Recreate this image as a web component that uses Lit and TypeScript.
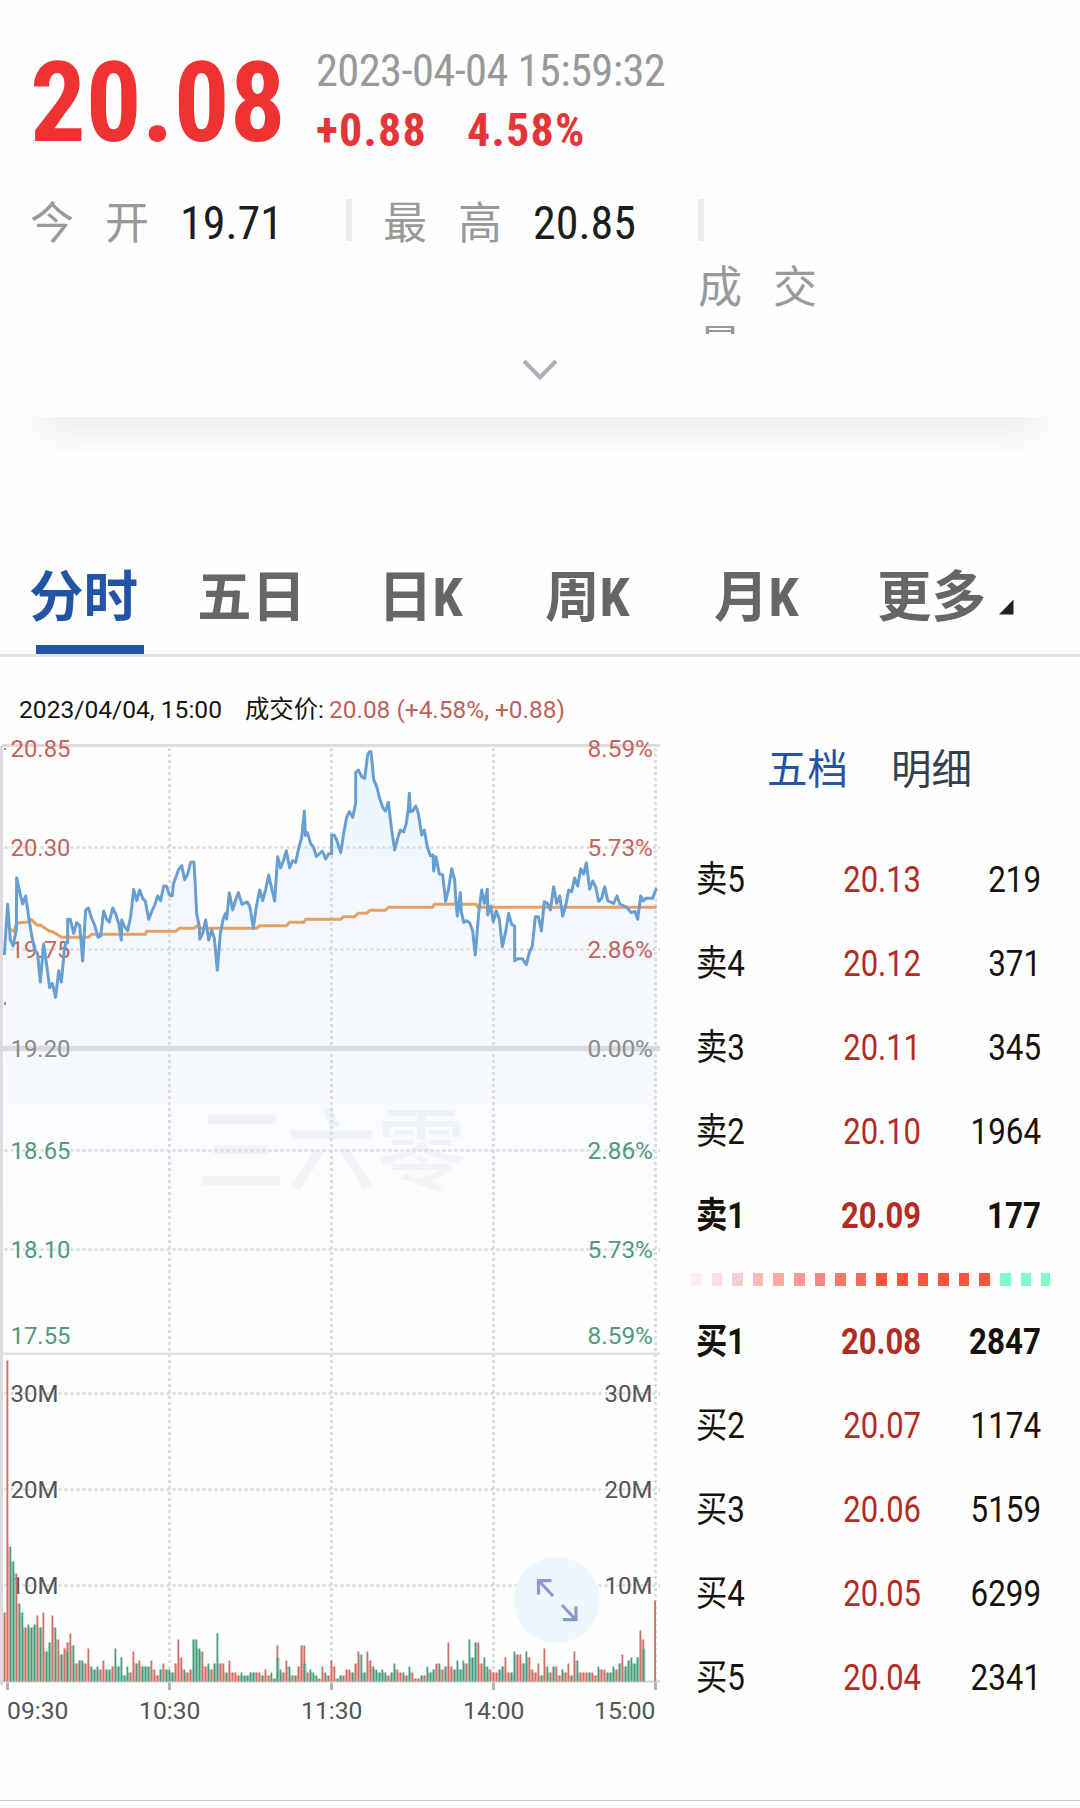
import { LitElement, html, svg, css } from "lit";
import { customElement } from "lit/decorators.js";
import { classMap } from "lit/directives/class-map.js";

/* Price and average traces, in thirds of a pixel from the chart's origin. */
const PRICE =
  "13,675 23,523 31,630 39,648 49,600 50,443 60,490 68,522 77,498 86,560 94,610 104,660 113,672 121,756 131,642 140,705 149,773 157,760 167,802 176,722 184,756 193,660 197,638 203,638 203,568 211,568 221,610 230,578 239,586 248,693 257,540 265,534 275,565 284,585 294,622 302,618 311,543 320,568 328,576 338,534 347,552 356,580 364,630 365,570 374,590 383,602 392,560 401,478 410,512 419,480 428,505 436,513 446,568 455,545 464,525 473,498 482,512 491,468 499,468 509,496 517,497 520,462 536,418 545,407 554,449 563,432 572,397 582,397 585,450 590,550 598,590 599,628 608,610 617,570 626,630 635,600 643,625 652,721 661,610 670,565 677,550 680,567 688,488 698,540 707,510 715,488 726,523 742,516 750,532 760,594 769,530 779,480 788,512 797,478 806,435 815,475 824,513 833,380 842,414 851,390 859,362 869,413 878,392 887,397 896,355 905,322 913,244 916,316 922,308 932,341 940,350 949,379 967,363 977,387 986,371 995,371 995,316 1003,316 1010,330 1022,368 1031,310 1040,262 1048,245 1058,262 1067,220 1067,128 1075,120 1085,140 1094,145 1103,75 1108,65 1113,65 1121,148 1130,170 1139,205 1148,232 1156,243 1165,217 1175,300 1184,360 1193,325 1201,300 1211,306 1219,280 1225,235 1228,190 1231,245 1238,243 1247,228 1255,250 1265,315 1273,300 1282,350 1291,377 1299,375 1301,423 1308,380 1318,432 1328,434 1337,514 1346,475 1355,416 1364,450 1369,530 1372,558 1381,488 1384,545 1391,577 1400,572 1409,578 1418,603 1426,675 1436,550 1445,480 1453,520 1462,478 1463,555 1472,528 1480,575 1489,543 1498,568 1507,650 1517,605 1526,550 1535,583 1544,588 1544,692 1553,686 1567,686 1579,704 1588,668 1597,648 1606,560 1615,560 1624,603 1633,515 1642,520 1651,540 1661,470 1670,520 1679,498 1688,558 1697,528 1706,480 1715,485 1724,444 1733,468 1742,416 1751,432 1759,398 1769,478 1778,453 1787,470 1796,514 1805,505 1814,470 1823,512 1841,520 1851,498 1860,522 1880,532 1894,548 1905,544 1913,568 1922,498 1930,513 1938,505 1958,505 1965,485 1970,475";
const AVERAGE =
  "31,598 42,604 50,580 60,578 84,576 93,568 112,586 122,586 148,604 155,604 185,622 265,622 275,613 436,613 440,604 527,604 537,595 582,595 592,587 598,595 770,595 778,587 860,587 868,577 912,577 917,568 1022,568 1030,560 1064,560 1074,550 1099,550 1110,541 1155,541 1166,532 1298,532 1303,523 1428,523 1434,532 1970,532";

/* One token per minute bar: r = up, g = down, then its height in 3px steps. */
const VOLUME = (
  "r23 r107 g45 g40 r36 g26 g23 r18 g19 g18 g19 r22 g18 r23 g10 g13 r22 g18 r14 g9 r11 r13 r16 g12 r6 g7 g7 r6 r11 g5 g4 g5 r4 r7 g4 g4 r5 g11 g5 g8 g2 g5 r3 r10 g6 r7 g5 g5 g5 r7 r4 r2 g4 r6 g4 g4 g3 r6 r14 r8 g4 r3 r4 g14 g14 g11 r10 r5 g6 r4 g6 g16 r6 r6 g3 r7 r3 r3 r2 g3 g2 g2 g3 g3 r3 r3 g2 r4 r2 g3 g1 r12 g4 r3 r7 g5 r2 g2 r5 r12 r12 r3 g4 g3 g2 r1 r5 g3 r2 r7 r5 " +
  "g1 g2 r2 r4 r4 g3 r6 r10 g9 g3 r10 r7 g5 g4 g3 g4 g3 r2 g3 g6 r4 r3 g3 r2 g5 r3 r1 r1 g2 r2 g5 g3 g4 r6 g6 r4 g5 r13 r5 g4 g7 g4 g7 r6 g14 g8 g13 r13 r6 g8 g5 r4 r3 r3 g4 g5 r8 r3 g3 g10 r9 r9 g6 g10 r8 r4 r3 r6 g2 r11 g5 r3 g5 r5 r2 g4 r3 r6 g2 r10 g7 r3 r3 r3 g3 r3 r2 g5 r4 r4 g3 g3 g5 r4 g6 r9 g5 g7 g8 g6 g8 r17 r14"
)
  .split(" ")
  .map((t) => ({ up: t[0] === "r", h: Number(t.slice(1)) }));

/* Green part in front of some red bars: bar index, height. */
const OVERLAY: [number, number][] = [[21, 10], [91, 8], [100, 6], [213, 11]];

const VLINES = [169.5, 331.5, 493.5, 655.5];
const PRICE_AXIS: [string, string, number, string][] = [
  ["20.85", "8.59%", 756.5, "up"],
  ["20.30", "5.73%", 855.5, "up"],
  ["19.75", "2.86%", 957.5, "up"],
  ["19.20", "0.00%", 1056.5, "flat"],
  ["18.65", "2.86%", 1158.5, "down"],
  ["18.10", "5.73%", 1257.5, "down"],
  ["17.55", "8.59%", 1343.5, "down"],
];
const VOLUME_AXIS: [string, number][] = [["30M", 1401.5], ["20M", 1497.5], ["10M", 1593.5]];
const TIMES: [string, number][] = [["09:30", 8], ["10:30", 140], ["11:30", 302], ["14:00", 464], ["15:00", 595]];

@customElement("minute-chart")
export class MinuteChart extends LitElement {
  static styles = css`
    :host { display: block; width: 660px; height: 1004px; font-stretch: 100%; }
    svg { display: block; overflow: visible; }
    .t { font-family: Roboto, "Noto Sans CJK SC", sans-serif; font-size: 24.5px; }
    .up { fill: #c6645c; }
    .flat { fill: #8b8c8f; }
    .down { fill: #4f9a7e; }
    .axis { fill: #555; }
    .dash { stroke: #d9d9de; stroke-width: 2.6; stroke-dasharray: 3 3; fill: none; }
    .mark { font-family: "Noto Sans CJK SC", sans-serif; font-size: 90px; font-weight: 500; fill: #1c2438; fill-opacity: 0.045; }
    .price { fill: none; stroke: #689fd3; stroke-width: 9; stroke-linejoin: round; }
    .avg { fill: none; stroke: #e5a163; stroke-width: 9; stroke-linejoin: round; }
  `;

  private bar(i: number, up: boolean, h: number, next: number) {
    const x = 3.5 + 3 * i;
    const low = Math.min(h, next) * 3;
    return svg`<rect x=${x + 1} y=${1681.5 - low} width="2" height=${low} fill=${up ? "#fbb3ab" : "#97d0bc"} />
      <rect x=${x} y=${1681.5 - h * 3} width="1.8" height=${h * 3} fill=${up ? "#cf6f66" : "#4b9b7e"} />`;
  }

  render() {
    return html`<svg width="660" height="1004" viewBox="0 736 660 1004">
      <defs>
        <linearGradient id="area" gradientUnits="userSpaceOnUse" x1="0" y1="40" x2="0" y2="1750">
          <stop offset="0" stop-color="#e6f7ff" />
          <stop offset="0.25" stop-color="#f3f7fd" />
          <stop offset="0.55" stop-color="#f6f9fe" />
          <stop offset="0.75" stop-color="#fbfcfe" />
          <stop offset="1" stop-color="#fefefe" />
        </linearGradient>
      </defs>
      <g transform="translate(0 730) scale(0.33333)">
        <polygon points="13,1860 ${PRICE} 1970,1860" fill="url(#area)" />
      </g>
      <text class="mark" x="196.500" y="1183" textLength="270">三六零</text>
      ${[847.5, 949.5, 1150.5, 1249.5, 1393.5, 1489.5, 1585.5].map((y) => svg`<path class="dash" d="M4.5 ${y}H660" />`)}
      ${VLINES.map((x) => svg`<path class="dash" d="M${x} 748V1681" />`)}
      <path d="M1.5 1685V748Q1.5 745.5 4 745.5H660" fill="none" stroke="#dcdcdf" stroke-width="3" />
      <path d="M0 1048.5H660" stroke="#dadbde" stroke-width="5.4" />
      <path d="M2 1353.7H660" stroke="#e0e1e3" stroke-width="2.6" />
      <path d="M2 1681.5H660" stroke="#d4d4d6" stroke-width="2" />
      <path d="M4 748h2v2h-2zM4 1002h2v3h-2z" fill="#999" />
      ${PRICE_AXIS.map(
        ([l, r, y, c]) => svg`<text class="t ${c}" x="10.500" y=${y} textLength="60" lengthAdjust="spacingAndGlyphs">${l}</text>
        <text class="t ${c}" x="587.500" y=${y} textLength="65.500" lengthAdjust="spacingAndGlyphs">${r}</text>`
      )}
      ${VOLUME_AXIS.map(
        ([l, y]) => svg`<text class="t axis" x="10.500" y=${y} textLength="48" lengthAdjust="spacingAndGlyphs">${l}</text>
        <text class="t axis" x="604.500" y=${y} textLength="48" lengthAdjust="spacingAndGlyphs">${l}</text>`
      )}
      ${VOLUME.map((b, i) => this.bar(i, b.up, b.h, VOLUME[i + 1]?.h ?? 0))}
      ${OVERLAY.map(([i, h]) => this.bar(i, false, h, h))}
      ${this.bar(217 - 0.1, true, 27, 0)}
      <g transform="translate(0 730) scale(0.33333)">
        <polyline class="avg" points=${AVERAGE} />
        <polyline class="price" points=${PRICE} />
      </g>
      ${[7.5, ...VLINES].map((x) => svg`<path d="M${x} 1682.5V1690" stroke="#b4b4b6" stroke-width="3" />`)}
      ${TIMES.map(
        ([l, x]) => svg`<text class="t axis" x=${x - 1} y="1719" textLength="61.5" lengthAdjust="spacingAndGlyphs">${l}</text>`
      )}
      <circle cx="556.7" cy="1600" r="43" fill="#edf7fe" />
      <path d="M551.5 1580.7H538.5V1594.5M539 1581L553 1596M562 1605L576 1620M563 1619.7H576V1606.5"
        fill="none" stroke="#8b99cb" stroke-width="3.2" />
    </svg>`;
  }
}

const BOOK: [string, string, string][] = [
  ["卖5", "20.13", "219"],
  ["卖4", "20.12", "371"],
  ["卖3", "20.11", "345"],
  ["卖2", "20.10", "1964"],
  ["卖1", "20.09", "177"],
  ["买1", "20.08", "2847"],
  ["买2", "20.07", "1174"],
  ["买3", "20.06", "5159"],
  ["买4", "20.05", "6299"],
  ["买5", "20.04", "2341"],
];
const RATIO = [
  "#feeef0", "#fddfe2", "#fccdce", "#fcbab7", "#fca9a6", "#fb9892", "#fb8780", "#fb7767", "#fb6957",
  "#fb543f", "#fb543f", "#fb543f", "#fb543f", "#fb543f", "#fb543f", "#80fdc4", "#80fdc4", "#80fdc4",
];

@customElement("order-book")
export class OrderBook extends LitElement {
  static styles = css`
    :host { display: block; font-family: Roboto, "Noto Sans CJK SC", sans-serif; font-stretch: 100%; }
    .tabs { display: flex; gap: 43px; padding: 0 0 0 76px; height: 60px; line-height: 60px; font-size: 40.5px; color: #333f4f; }
    .on { color: #2455a4; }
    .rows { padding-top: 38px; }
    .row { display: grid; grid-template-columns: 114px 111px 120px; padding-left: 5px; height: 84px; line-height: 84px; font-size: 36px; color: #17120d; }
    .row.best { font-weight: 700; }
    .row span { display: block; white-space: nowrap; }
    .name { transform: scaleX(0.87); transform-origin: left; }
    .price { transform: scaleX(0.86); transform-origin: right; text-align: right; color: #b32c21; }
    .qty { transform: scaleX(0.87); transform-origin: right; text-align: right; }
    .ratio { display: flex; gap: 10px; height: 42px; align-items: center; width: 359px; overflow: hidden; }
    .ratio i { flex: none; width: 10.6px; height: 13px; }
  `;

  private row(r: [string, string, string], i: number) {
    return html`<div class=${classMap({ row: true, best: i === 4 || i === 5 })}>
      <span class="name">${r[0]}</span><span class="price">${r[1]}</span><span class="qty">${r[2]}</span>
    </div>`;
  }

  render() {
    return html`
      <div class="tabs"><span class="on">五档</span><span>明细</span></div>
      <div class="rows">
        ${BOOK.slice(0, 5).map((r, i) => this.row(r, i))}
        <div class="ratio">${RATIO.map((c) => html`<i style="background:${c}"></i>`)}</div>
        ${BOOK.slice(5).map((r, i) => this.row(r, i + 5))}
      </div>
    `;
  }
}

@customElement("app-root")
export class AppRoot extends LitElement {
  static styles = css`
    :host {
      display: block; width: 1080px; height: 1808px; overflow: hidden; background: #fefefe;
      font-family: "Roboto Condensed", Roboto, "Noto Sans CJK SC", sans-serif; font-stretch: 75%;
    }
    * { box-sizing: border-box; }
    .head { height: 417px; padding: 41px 0 0 30px; background: #fefefe; }
    .quote { display: flex; height: 125px; }
    .last { width: 286px; padding-top: 2px; font-size: 110.5px; line-height: 120px; font-weight: 700; color: #ef3232; white-space: nowrap; }
    .side { padding-top: 1px; white-space: nowrap; }
    .date { font-size: 44.5px; line-height: 58px; letter-spacing: -0.6px; color: #999; }
    .chg { display: flex; font-size: 46px; line-height: 61px; letter-spacing: 1.2px; font-weight: 700; color: #e43538; }
    .chg span:first-child { width: 151px; }
    .stats { display: flex; height: 170px; padding-top: 26px; font-size: 44px; color: #999; overflow: hidden; }
    .stat { display: flex; width: 353px; line-height: 64px; white-space: nowrap; }
    .stat .k { width: 150px; letter-spacing: 31px; }
    .stat b { font-weight: 400; font-size: 46px; line-height: 62px; color: #1c1d1f; }
    .sep { flex: none; width: 6px; height: 42px; margin: 7px 0 0 -37px; background: #ececec; }
    .stat + .sep + .stat { margin-left: 31px; width: 352px; }
    .vol { flex: none; width: 170px; height: 142px; padding-top: 67px; margin-left: -6px; line-height: 59px; letter-spacing: 31px; overflow: hidden; }
    .more { display: flex; justify-content: center; padding: 22px 28px 0 0; }
    .shadow { height: 34px; display: flex; overflow: hidden; justify-content: center; }
    .shadow i { width: 970px; height: 20px; margin-top: -20px; box-shadow: 0 0 44px 10px rgba(0, 0, 0, 0.11); }
    .tabs {
      display: flex; margin-top: 96px; height: 110px; border-bottom: 3px solid #e3e3e6; padding-left: 29px;
      font-size: 54.5px; line-height: 100px; font-weight: 700; color: #666; white-space: nowrap;
    }
    .t1 { width: 168px; color: #2455a4; }
    .t2 { width: 181px; }
    .t3 { width: 167px; }
    .t4 { width: 169px; }
    .t5 { width: 163px; }
    .t1::after { content: ""; display: block; width: 108px; height: 9px; margin: -2px 0 0 7px; background: #2455a4; }
    .t6 { display: flex; gap: 13px; }
    .t6 svg { margin-top: 52px; }
    .body { display: flex; height: 1144px; border-bottom: 1px solid #c9c9c9; }
    .left { width: 660px; flex: none; }
    .info { display: flex; height: 79px; padding: 7px 0 0 20px; }
    .info svg { display: block; font-stretch: 100%; }
    .info text { font-family: Roboto, "Noto Sans CJK SC", sans-serif; font-size: 24.5px; }
    .dark { fill: #17140f; }
    .red { fill: #bf6259; }
    order-book { padding: 83px 0 0 31px; width: 389px; }
    .foot { height: 6px; }
  `;

  render() {
    return html`
      <section class="head">
        <div class="quote">
          <div class="last">20.08</div>
          <div class="side">
            <div class="date">2023-04-04 15:59:32</div>
            <div class="chg"><span>+0.88</span><span>4.58%</span></div>
          </div>
        </div>
        <div class="stats">
          <div class="stat"><span class="k">今开</span><b>19.71</b></div>
          <i class="sep"></i>
          <div class="stat"><span class="k">最高</span><b>20.85</b></div>
          <i class="sep"></i>
          <div class="vol">成交<br />量</div>
        </div>
        <div class="more">
          <svg width="40" height="24" viewBox="0 0 40 24">
            <path d="M3 3L19 19.500L35 3" fill="none" stroke="#abb0b8" stroke-width="4" />
          </svg>
        </div>
      </section>
      <div class="shadow"><i></i></div>
      <nav class="tabs">
        <div class="t1">分时</div>
        <div class="t2">五日</div>
        <div class="t3">日K</div>
        <div class="t4">周K</div>
        <div class="t5">月K</div>
        <div class="t6">更多<svg width="16" height="16"><path d="M0 15.500L14.500 0.500V15.500Z" fill="#222" /></svg></div>
      </nav>
      <main class="body">
        <div class="left">
          <div class="info">
            <svg width="600" height="70" viewBox="20 664 600 70">
              <text class="dark" x="19" y="718" textLength="203" lengthAdjust="spacingAndGlyphs">2023/04/04, 15:00</text>
              <text class="dark" x="245" y="718" textLength="79" lengthAdjust="spacingAndGlyphs">成交价:</text>
              <text class="red" x="329" y="718" textLength="236" lengthAdjust="spacingAndGlyphs">20.08 (+4.58%, +0.88)</text>
            </svg>
          </div>
          <minute-chart></minute-chart>
        </div>
        <order-book></order-book>
      </main>
      <div class="foot"></div>
    `;
  }
}
